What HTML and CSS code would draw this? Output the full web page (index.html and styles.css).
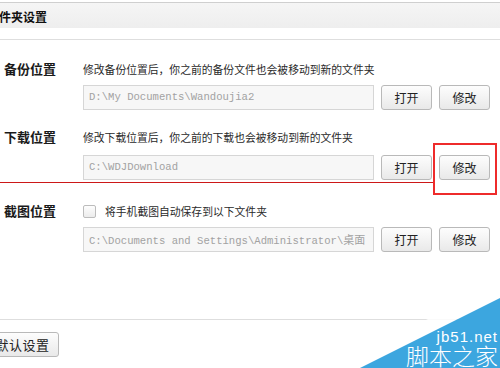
FILE: index.html
```html
<!DOCTYPE html>
<html lang="zh-CN">
<head>
<meta charset="utf-8">
<title>文件夹设置</title>
<link rel="stylesheet" href="styles.css">
</head>
<body>
<div class="page">
  <div class="titlebar"><span class="title">文件夹设置</span></div>
  <div class="settings">
    <section class="row row-first">
      <div class="label">备份位置</div>
      <div class="desc">修改备份位置后，你之前的备份文件也会被移动到新的文件夹</div>
      <div class="controls">
        <div class="path">D:\My Documents\Wandoujia2</div>
        <button class="btn">打开</button>
        <button class="btn">修改</button>
      </div>
    </section>
    <section class="row row-second">
      <div class="label">下载位置</div>
      <div class="desc">修改下载位置后，你之前的下载也会被移动到新的文件夹</div>
      <div class="controls">
        <div class="path">C:\WDJDownload</div>
        <button class="btn">打开</button>
        <button class="btn">修改</button>
      </div>
    </section>
    <section class="row row-third">
      <div class="label">截图位置</div>
      <div class="desc check-line"><span class="checkbox"></span><span>将手机截图自动保存到以下文件夹</span></div>
      <div class="controls">
        <div class="path">C:\Documents and Settings\Administrator\<span class="cjk">桌面</span></div>
        <button class="btn">打开</button>
        <button class="btn">修改</button>
      </div>
    </section>
  </div>
  <div class="footer"><button class="btn btn-default">默认设置</button></div>

  <div class="annot-line"></div>
  <div class="annot-box"></div>

  <div class="watermark">
    <svg class="wm-shape" width="200" height="90" viewBox="0 0 200 90">
      <defs>
        <linearGradient id="fade" x1="0" y1="1" x2="0.3" y2="0.55">
          <stop offset="0" stop-color="#fff" stop-opacity="0"/>
          <stop offset="1" stop-color="#fff" stop-opacity="0.85"/>
        </linearGradient>
      </defs>
      <polygon points="30,90 200,5 200,20 60,90" fill="url(#fade)"/>
      <polygon points="60,90 200,20 200,90" fill="#3ca6df"/>
    </svg>
    <span class="wm-url">jb51.net</span>
    <span class="wm-name">脚本之家</span>
  </div>
</div>
</body>
</html>
```

FILE: styles.css
```css
html, body {
  margin: 0;
  padding: 0;
  background: #fff;
}
.page {
  position: relative;
  width: 500px;
  height: 368px;
  overflow: hidden;
  font-family: "Noto Sans CJK SC", "Liberation Sans", sans-serif;
  color: #222;
}
.titlebar {
  margin-top: 2px;
  height: 25px;
  border-top: 1px solid #cfcfcf;
  background: linear-gradient(#f5f5f5, #eeeeee);
  line-height: 25px;
}
.title {
  display: inline-block;
  margin-left: -13px;
  font-size: 12px;
  font-weight: bold;
  color: #111;
}
.settings {
  margin-top: 11px;
  border-top: 1px solid #dedede;
  padding-top: 21px;
}
.row {
  display: grid;
  grid-template-columns: 56px 1fr;
  column-gap: 27px;
}
.row-second { margin-top: 19px; }
.row-third { margin-top: 23px; }
.label {
  font-size: 13px;
  font-weight: bold;
  line-height: 16px;
  text-align: right;
  color: #1a1a1a;
}
.desc {
  font-size: 10.8px;
  line-height: 16px;
  color: #2a2a2a;
  white-space: nowrap;
}
.check-line {
  display: flex;
  align-items: center;
  gap: 9px;
}
.checkbox {
  width: 11px;
  height: 11px;
  border: 1px solid #bcbcbc;
  border-radius: 2px;
  background: linear-gradient(#fdfdfd, #ececec);
}
.controls {
  grid-column: 2;
  display: flex;
  gap: 7px;
  margin-top: 8px;
}
.row-second .controls { margin-top: 10px; }
.path {
  box-sizing: border-box;
  width: 291px;
  height: 25px;
  border: 1px solid #d6d6d6;
  background: #f7f7f7;
  padding-left: 5px;
  font-family: "Liberation Mono", monospace;
  font-size: 10.6px;
  line-height: 23px;
  color: #a2a2a2;
  white-space: nowrap;
  overflow: hidden;
}
.cjk {
  font-family: "Noto Sans CJK SC", sans-serif;
  font-size: 11px;
}
.btn {
  box-sizing: border-box;
  width: 51px;
  height: 25px;
  padding: 0;
  border: 1px solid #b9b9b9;
  border-radius: 3px;
  background: linear-gradient(#fdfdfd, #e9e9e9);
  font-family: "Noto Sans CJK SC", sans-serif;
  font-size: 12px;
  color: #222;
}
.footer {
  margin-top: 67px;
  border-top: 1px solid #dedede;
  padding-top: 11px;
}
.btn-default {
  width: 73px;
  margin-left: -14px;
  font-size: 13px;
  letter-spacing: 0.5px;
}
.annot-line {
  position: absolute;
  left: 0;
  top: 182px;
  width: 434px;
  height: 1px;
  background: #cc1818;
}
.annot-box {
  position: absolute;
  left: 433px;
  top: 143px;
  width: 60px;
  height: 48px;
  border: 2px solid #ee2b2b;
}
.watermark {
  position: absolute;
  right: 0;
  bottom: 0;
  width: 200px;
  height: 90px;
}
.wm-shape {
  position: absolute;
  left: 0;
  top: 0;
}
.wm-url {
  position: absolute;
  right: 2px;
  top: 51px;
  font-family: "Liberation Sans", sans-serif;
  font-size: 15px;
  line-height: 16px;
  letter-spacing: 1px;
  color: #fff;
}
.wm-name {
  position: absolute;
  right: 2px;
  top: 65px;
  font-family: "Noto Sans CJK SC", sans-serif;
  font-size: 23px;
  line-height: 25px;
  color: #fff;
  font-weight: 300;
}
```
